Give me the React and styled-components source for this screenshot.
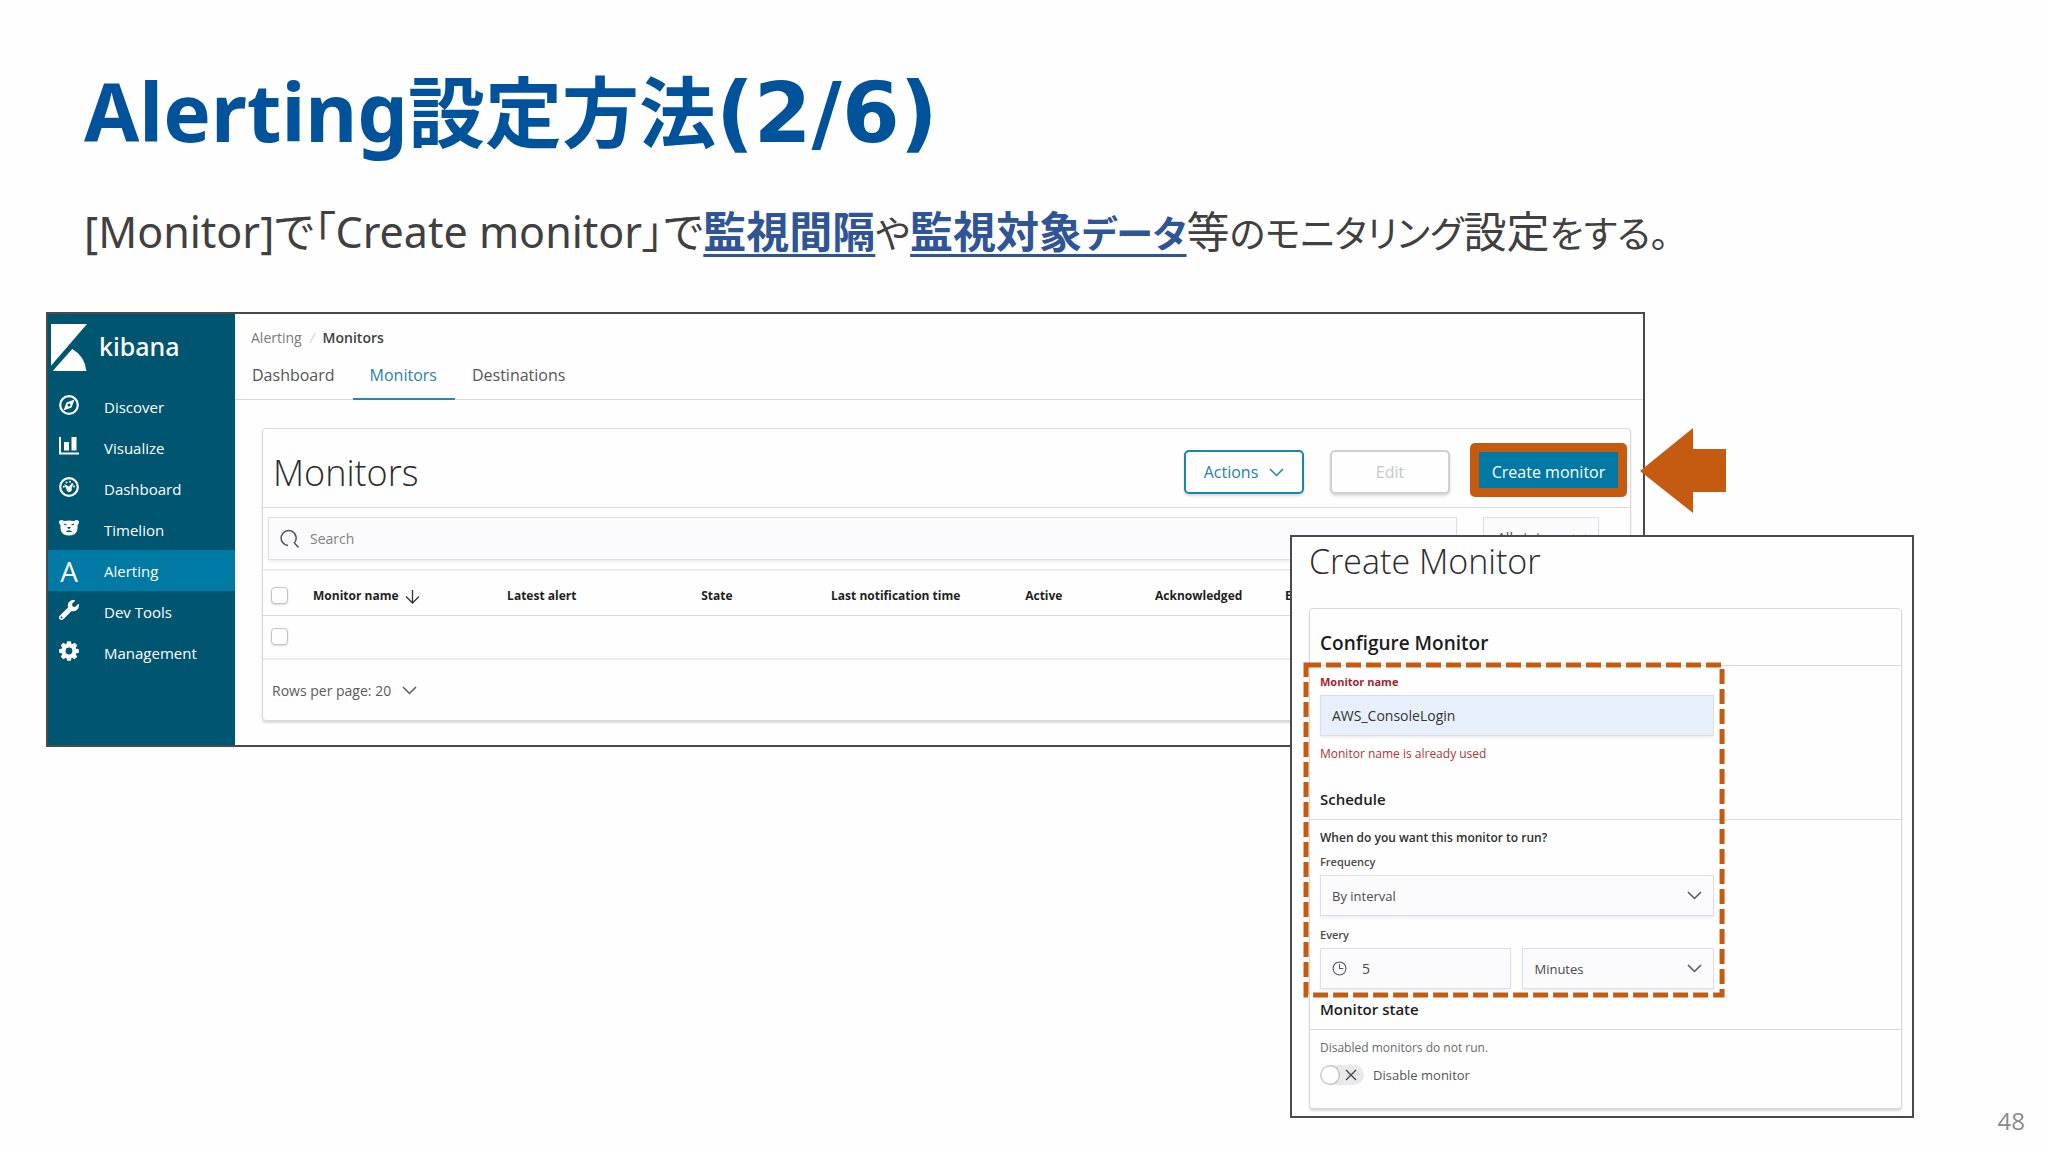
import styled, { createGlobalStyle } from "styled-components";
import { FaWrench } from "react-icons/fa";

const GlobalStyle = createGlobalStyle`
  * {
    box-sizing: border-box;
  }
  body {
    margin: 0;
    background: #fefefe;
  }
  button, input, select {
    font-family: inherit;
    margin: 0;
  }
`;

const Slide = styled.main`
  min-height: 100vh;
  font-family: "Open Sans", "Noto Sans CJK JP", sans-serif;
  color: #404040;
`;

const SlideTitle = styled.h1`
  margin: 0;
  padding: 59px 84px 0;
  font-family: "Noto Sans", "Noto Sans CJK JP", sans-serif;
  font-size: 80px;
  line-height: 104px;
  font-weight: 700;
  color: #00529b;
`;

const TitleKanji = styled.span`
  font-size: 77px;
`;

const TitleCount = styled.span`
  font-family: "DejaVu Sans", sans-serif;
  font-size: 83px;
`;

const Lead = styled.p`
  margin: 0;
  padding: 34px 84px 0;
  font-family: "Noto Sans", "Noto Sans CJK JP", sans-serif;
  font-size: 43px;
  line-height: 64px;
  font-feature-settings: "palt";
  color: #404040;
`;

const Kana = styled.span`
  font-size: 37px;
`;

const Keyword = styled.strong`
  font-weight: 700;
  color: #2f5597;
  text-decoration: underline;
  text-decoration-thickness: 3px;
  text-underline-offset: 6px;
`;

const Figure = styled.section`
  display: grid;
  grid-template-columns: minmax(0, 1245fr) minmax(0, 354fr) minmax(0, 269fr) 134px;
  padding: 46px 0 0 46px;
  align-items: start;
`;

const KibanaWindow = styled.div`
  grid-area: 1 / 1 / 2 / 3;
  display: grid;
  grid-template-columns: 187px minmax(0, 1fr);
  border: 2px solid #4a4a4d;
  background: #fefefe;
`;

const Sidebar = styled.nav`
  background: #005571;
  color: #fff;
`;

const Brand = styled.div`
  display: flex;
  align-items: center;
  gap: 12px;
  height: 72px;
  padding: 0 3px;

  svg {
    margin-bottom: 6px;
  }
`;

const BrandName = styled.span`
  padding-bottom: 8px;
  font-family: "Noto Sans", sans-serif;
  font-size: 25px;
  line-height: 32px;
  font-weight: 500;
`;

const NavLink = styled.a`
  display: flex;
  align-items: center;
  height: 41px;
  padding-left: 11px;
  gap: 25px;
  font-size: 15px;
  color: #fff;
  text-decoration: none;
  background: ${({ $active }) => ($active ? "#0079a5" : "transparent")};

  svg {
    width: 20px;
    height: 20px;
    margin-bottom: 4px;
  }
`;

const LetterIcon = styled.span`
  width: 20px;
  text-align: center;
  font-size: 28px;
  line-height: 36px;
`;

const Main = styled.div`
  padding-bottom: 24px;
`;

const Breadcrumb = styled.div`
  display: flex;
  gap: 8px;
  padding: 12px 16px 0;
  font-size: 14px;
  line-height: 24px;
  color: #7a7a7a;

  a {
    color: inherit;
    text-decoration: none;
  }
  i {
    color: #d0d0d0;
  }
  strong {
    font-weight: 600;
    color: #3f3f3f;
  }
`;

const Tabs = styled.div`
  display: flex;
  height: 50px;
  margin-bottom: 28px;
  border-bottom: 1px solid #d9d9d9;
`;

const Tab = styled.button`
  height: 50px;
  padding: 2px 18px 0 17px;
  border: 0;
  border-bottom: 2px solid ${({ $active }) => ($active ? "#3185a0" : "transparent")};
  background: none;
  font-size: 16px;
  color: ${({ $active }) => ($active ? "#2e82a5" : "#555")};
`;

const Panel = styled.div`
  border: 1px solid #d9d9d9;
  border-radius: 4px;
  box-shadow: 0 2px 2px rgba(0, 0, 0, 0.14);
  background: #fefefe;
`;

const MonitorsPanel = styled(Panel)`
  margin: 0 12px 0 27px;
`;

const PanelHeader = styled.div`
  display: flex;
  align-items: center;
  height: 79px;
  padding: 0 3px 0 10px;
  border-bottom: 1px solid #d9d9d9;
`;

const LightTitle = styled.h2`
  flex: 1;
  margin: 0;
  padding-top: 10px;
  font-size: 36px;
  line-height: 48px;
  font-weight: 300;
  color: #2b2b2b;
`;

const Button = styled.button`
  display: flex;
  align-items: center;
  justify-content: center;
  gap: 11px;
  width: 120px;
  height: 44px;
  margin: 8px 26px 0 0;
  border: 2px solid ${({ disabled }) => (disabled ? "#d0cfd3" : "#1b86a8")};
  border-radius: 5px;
  background: #fefefe;
  box-shadow: 0 2px 3px rgba(0, 0, 0, 0.15);
  font-size: 16px;
  color: ${({ disabled }) => (disabled ? "#c8c6cc" : "#2681a8")};
`;

const Highlight = styled.div`
  margin: 4px 0 0 -6px;
  padding: 9px;
  border-radius: 5px;
  background: #c55a11;
`;

const PrimaryButton = styled.button`
  display: block;
  height: 36px;
  width: 139px;
  padding: 4px 0 0;
  border: 0;
  background: #0079a5;
  font-size: 16px;
  color: #fff;
`;

const SearchRow = styled.div`
  display: flex;
  gap: 26px;
  padding: 9px 31px 9px 5px;
  border-bottom: 2px solid #ececef;
`;

const Field = styled.div`
  position: relative;
  display: flex;
  align-items: center;
  flex: ${({ $basis }) => $basis || "1"};
  min-width: 0;

  > svg {
    position: absolute;
    pointer-events: none;
    color: #555;
  }
`;

const LeftIcon = styled.svg`
  left: 12px;
`;

const RightIcon = styled.svg`
  right: 12px;
`;

const control = `
  width: 100%;
  border: 1px solid #dfdfe3;
  border-radius: 0;
  background: #fbfafd;
  box-shadow: 0 2px 2px rgba(0, 0, 0, 0.06);
  appearance: none;
  outline: 0;
`;

const TextInput = styled.input`
  ${control}
  height: ${({ $tall }) => ($tall ? "43px" : "41px")};
  padding: 0 12px 0 ${({ $icon }) => ($icon ? "41px" : "11px")};
  font-size: 14px;
  color: #4a4a4a;

  &[aria-invalid="true"] {
    background: #e8f0fe;
    color: #333;
  }
  &::placeholder {
    color: #828282;
  }
`;

const Select = styled.select`
  ${control}
  height: ${({ $tall }) => ($tall ? "43px" : "41px")};
  padding: 0 ${({ $tall }) => ($tall ? "13px 2px" : "11px 0")};
  font-size: ${({ $tall }) => ($tall ? "14px" : "13px")};
  color: #4a4a4a;
`;

const Table = styled.table`
  width: 100%;
  table-layout: fixed;
  border-collapse: collapse;
  font-size: 12px;

  th {
    height: 44px;
    padding: 6px 0 0;
    border-bottom: 1px solid #d9d9d9;
    text-align: left;
    font-weight: 700;
    color: #1f1f1f;
    white-space: nowrap;
  }
  td {
    height: 44px;
    padding: 0;
    border-bottom: 2px solid #ececef;
  }
  th:first-child, td:first-child {
    padding-left: 8px;
  }
  th svg {
    vertical-align: middle;
    margin-left: 6px;
  }
`;

const Col = styled.col`
  width: ${({ $width }) => $width};
`;

const Checkbox = styled.input`
  display: block;
  width: 17px;
  height: 17px;
  margin: 0;
  appearance: none;
  border: 1px solid #c4c3c9;
  border-radius: 4px;
  background: #fefefe;
  box-shadow: 0 1px 2px rgba(0, 0, 0, 0.15);
`;

const RowsPerPage = styled.button`
  display: flex;
  align-items: center;
  gap: 11px;
  height: 60px;
  padding: 0 9px;
  border: 0;
  background: none;
  font-size: 14px;
  color: #5a5a5a;
`;

const Arrow = styled.svg`
  grid-area: 1 / 3 / 2 / 4;
  width: 86px;
  height: 85px;
  margin: 116px 0 0 -5px;
`;

const Dialog = styled.div`
  grid-area: 1 / 2 / 2 / 4;
  margin: 223px 0 20px -1px;
  padding: 0 10px 7px 17px;
  border: 2px solid #4a4a4d;
  background: #fefefe;
  z-index: 1;

  h2 {
    padding-top: 0;
    margin-bottom: 23px;
    font-size: 34px;
  }
`;

const SectionTitle = styled.h3`
  display: flex;
  align-items: flex-end;
  height: ${({ $height }) => $height}px;
  margin: 0;
  padding: 0 10px ${({ $large }) => ($large ? "10px" : "8px")};
  border-bottom: 1px solid #d9d9d9;
  font-size: ${({ $large }) => ($large ? "19px" : "15px")};
  line-height: 24px;
  font-weight: 600;
  color: #1c1c1c;
`;

const Marked = styled.div`
  position: relative;
`;

const Dashes = styled.svg`
  position: absolute;
  top: -1px;
  left: -4px;
  width: calc(66% + 26px);
  height: 330px;
  overflow: visible;
  pointer-events: none;
`;

const Fields = styled.div`
  display: flex;
  flex-direction: column;
  width: calc(68% + 2px);
  padding: 7px 0 0 10px;
`;

const FieldRow = styled.div`
  display: flex;
  gap: 11px;
`;

const Label = styled.label`
  margin-bottom: 4px;
  font-size: 11px;
  line-height: 18px;
  font-weight: ${({ $error }) => ($error ? 700 : 600)};
  color: ${({ $error }) => ($error ? "#a3262e" : "#4a4a4a")};
`;

const Question = styled.p`
  margin: 2px 0 6px;
  font-size: 12px;
  line-height: 18px;
  font-weight: 600;
  color: #2f2f2f;
`;

const ErrorText = styled.p`
  margin: 9px 0 0;
  font-size: 12px;
  line-height: 18px;
  color: #b0333d;
`;

const Spacer = styled.div`
  height: 10px;
`;

const StateBody = styled.div`
  padding: 9px 10px 23px;
  font-size: 12px;
  line-height: 18px;
  color: #6a6a6a;
`;

const Toggle = styled.label`
  display: flex;
  align-items: center;
  gap: 9px;
  margin-top: 8px;
  font-size: 13px;
  line-height: 20px;
  color: #555;
`;

const Switch = styled.input`
  appearance: none;
  width: 44px;
  height: 20px;
  margin: 0;
  border-radius: 10px;
  background:
    radial-gradient(circle at 10px 10px, #fefefe 8px, #c8c8cc 9px, #c8c8cc 10px, transparent 10px),
    #e9e9eb;
`;

const SwitchBox = styled.span`
  position: relative;
  display: flex;

  svg {
    position: absolute;
    top: 4px;
    right: 7px;
  }
`;

const PageNumber = styled.footer`
  grid-area: 1 / 4 / 2 / 5;
  align-self: end;
  padding-right: 23px;
  text-align: right;
  font-size: 24px;
  line-height: 34px;
  color: #8a8a8a;
`;

const Chevron = ({ as: Svg = "svg" }) => (
  <Svg width="15" height="9" viewBox="0 0 15 9" fill="none" stroke="currentColor" strokeWidth="1.5">
    <path d="M1 1l6.5 6.5L14 1" />
  </Svg>
);

const KibanaLogo = () => (
  <svg width="36" height="47" viewBox="0 0 105 137" fill="#fff" aria-hidden="true">
    <path d="M0 0H105L0 122Z" />
    <path d="M62 73Q99 94 103 137H5Z" />
  </svg>
);

const CompassIcon = () => (
  <svg viewBox="0 0 20 20" fill="none">
    <circle cx="10" cy="10" r="8.8" stroke="#fff" strokeWidth="2.2" />
    <path d="M15.500 4.500l-3 8-8 3 3-8z" fill="#fff" />
    <circle cx="10" cy="10" r="1.500" fill="#005571" />
  </svg>
);

const ChartIcon = () => (
  <svg viewBox="0 0 20 20" fill="#fff">
    <path d="M0 1h2v15.500h18v2H0z" />
    <path d="M5 6h5v8.500H5zM12.500 1h5v13.500h-5z" />
  </svg>
);

const GaugeIcon = () => (
  <svg viewBox="0 0 20 20" fill="#fff">
    <circle cx="10" cy="10" r="8.8" fill="none" stroke="#fff" strokeWidth="2.2" />
    <path d="M5 7l5 2.500 3-3.500 1.500 1-2 4a2.700 2.700 0 1 1-5 1z" />
    <circle cx="7.500" cy="5.500" r="1" />
    <circle cx="11" cy="4.800" r="1" />
    <circle cx="15" cy="9.500" r="1" />
    <circle cx="4.800" cy="9.800" r="1" />
  </svg>
);

const BearIcon = () => (
  <svg viewBox="0 0 20 20">
    <path d="M0 4q0-2 3-2l2 1q5-1 10 0l2-1q3 0 3 2 0 2-1.500 3 .5 3-.5 6-2 4.500-8 4.500T2 13q-1-3-.5-6Q0 6 0 4z" fill="#fff" />
    <path d="M5 6l2.500 1M15 6l-2.500 1" stroke="#005571" strokeWidth="1.200" />
    <path d="M8 9h4l-2 2.500z" fill="#005571" />
    <path d="M6.500 14q3.500-3.500 7 0z" fill="#005571" />
  </svg>
);

const GearIcon = () => (
  <svg viewBox="-10 -10 20 20">
    <g fill="#fff">
      {[0, 45, 90, 135, 180, 225, 270, 315].map((angle) => (
        <path key={angle} d="M-2.800-6L-1.800-9.800H1.800L2.800-6z" transform={`rotate(${angle})`} />
      ))}
    </g>
    <circle r="5.200" fill="none" stroke="#fff" strokeWidth="3.600" />
  </svg>
);

const AlertingIcon = () => <LetterIcon>A</LetterIcon>;

const navItems = [
  { label: "Discover", Icon: CompassIcon },
  { label: "Visualize", Icon: ChartIcon },
  { label: "Dashboard", Icon: GaugeIcon },
  { label: "Timelion", Icon: BearIcon },
  { label: "Alerting", Icon: AlertingIcon, active: true },
  { label: "Dev Tools", Icon: FaWrench },
  { label: "Management", Icon: GearIcon },
];

const columns = [
  { label: "Latest alert", width: "14.2%" },
  { label: "State", width: "9.5%" },
  { label: "Last notification time", width: "14.2%" },
  { label: "Active", width: "9.5%" },
  { label: "Acknowledged", width: "9.5%" },
  { label: "Errors", width: "9.5%" },
  { label: "Ignored", width: "auto" },
];

const MonitorsPage = () => (
  <KibanaWindow>
    <Sidebar>
      <Brand>
        <KibanaLogo />
        <BrandName>kibana</BrandName>
      </Brand>
      {navItems.map(({ label, Icon, active }) => (
        <NavLink key={label} href="#" $active={active}>
          <Icon />
          {label}
        </NavLink>
      ))}
    </Sidebar>
    <Main>
      <Breadcrumb>
        <a href="#">Alerting</a>
        <i>/</i>
        <strong>Monitors</strong>
      </Breadcrumb>
      <Tabs>
        <Tab>Dashboard</Tab>
        <Tab $active>Monitors</Tab>
        <Tab>Destinations</Tab>
      </Tabs>
      <MonitorsPanel>
        <PanelHeader>
          <LightTitle>Monitors</LightTitle>
          <Button>
            Actions
            <Chevron />
          </Button>
          <Button disabled>Edit</Button>
          <Highlight>
            <PrimaryButton>Create monitor</PrimaryButton>
          </Highlight>
        </PanelHeader>
        <SearchRow>
          <Field>
            <LeftIcon width="20" height="20" viewBox="0 0 20 20" fill="none" stroke="currentColor" strokeWidth="1.5">
              <path d="M8 16.500a7.500 7.500 0 1 1 6-2.200M14 13.500l4.500 5" />
            </LeftIcon>
            <TextInput $tall $icon type="search" placeholder="Search" aria-label="Search" />
          </Field>
          <Field $basis="0 0 116px">
            <Select $tall aria-label="State filter">
              <option>All states</option>
            </Select>
            <Chevron as={RightIcon} />
          </Field>
        </SearchRow>
        <Table>
          <colgroup>
            <Col $width="50px" />
            <Col $width="14.2%" />
            {columns.map(({ label, width }) => (
              <Col key={label} $width={width} />
            ))}
          </colgroup>
          <thead>
            <tr>
              <th>
                <Checkbox type="checkbox" aria-label="Select all monitors" />
              </th>
              <th>
                Monitor name
                <svg width="15" height="14" viewBox="0 0 15 14" fill="none" stroke="#333" strokeWidth="1.3">
                  <path d="M7.500 0v12.500M1 6.500L7.500 13 14 6.500" />
                </svg>
              </th>
              {columns.map(({ label }) => (
                <th key={label}>{label}</th>
              ))}
            </tr>
          </thead>
          <tbody>
            <tr>
              <td>
                <Checkbox type="checkbox" aria-label="Select monitor" />
              </td>
              <td colSpan={8} />
            </tr>
          </tbody>
        </Table>
        <RowsPerPage>
          Rows per page: 20
          <Chevron />
        </RowsPerPage>
      </MonitorsPanel>
    </Main>
  </KibanaWindow>
);

const CreateMonitorDialog = () => (
  <Dialog>
    <LightTitle>Create Monitor</LightTitle>
    <Panel>
      <SectionTitle $large $height={57}>
        Configure Monitor
      </SectionTitle>
      <Marked>
        <Fields>
          <Label $error htmlFor="monitor-name">
            Monitor name
          </Label>
          <TextInput id="monitor-name" defaultValue="AWS_ConsoleLogin" aria-invalid="true" />
          <ErrorText>Monitor name is already used</ErrorText>
        </Fields>
        <SectionTitle $height={57}>Schedule</SectionTitle>
        <Fields>
          <Question>When do you want this monitor to run?</Question>
          <Label htmlFor="frequency">Frequency</Label>
          <Field>
            <Select id="frequency">
              <option>By interval</option>
            </Select>
            <Chevron as={RightIcon} />
          </Field>
          <Spacer />
          <Label htmlFor="every">Every</Label>
          <FieldRow>
            <Field>
              <LeftIcon width="15" height="15" viewBox="0 0 14 14" fill="none" stroke="currentColor">
                <circle cx="7" cy="7" r="6" />
                <path d="M7 3v4h3.500" />
              </LeftIcon>
              <TextInput $icon id="every" defaultValue="5" />
            </Field>
            <Field>
              <Select aria-label="Interval unit">
                <option>Minutes</option>
              </Select>
              <Chevron as={RightIcon} />
            </Field>
          </FieldRow>
        </Fields>
        <Dashes>
          <rect width="100%" height="100%" fill="none" stroke="#c55a11" strokeWidth="5" strokeDasharray="15 5" />
        </Dashes>
      </Marked>
      <SectionTitle $height={41}>Monitor state</SectionTitle>
      <StateBody>
        Disabled monitors do not run.
        <Toggle>
          <SwitchBox>
            <Switch type="checkbox" role="switch" />
            <svg width="12" height="12" viewBox="0 0 12 12" stroke="#444" strokeWidth="1.3">
              <path d="M1 1l10 10M11 1L1 11" />
            </svg>
          </SwitchBox>
          Disable monitor
        </Toggle>
      </StateBody>
    </Panel>
  </Dialog>
);

const App = () => (
  <Slide>
    <GlobalStyle />
    <SlideTitle>
      Alerting<TitleKanji>設定方法</TitleKanji>
      <TitleCount>(2/6)</TitleCount>
    </SlideTitle>
    <Lead>
      [Monitor]で「Create monitor」で<Keyword>監視間隔</Keyword>
      <Kana>や</Kana>
      <Keyword>
        監視対象<Kana>データ</Kana>
      </Keyword>
      等<Kana>のモニタリング</Kana>設定<Kana>をする。</Kana>
    </Lead>
    <Figure>
      <MonitorsPage />
      <Arrow viewBox="0 0 86 85" aria-hidden="true">
        <path d="M0 43L53 0v21h33v43H53v21z" fill="#c55a11" />
      </Arrow>
      <CreateMonitorDialog />
      <PageNumber>48</PageNumber>
    </Figure>
  </Slide>
);

export default App;
